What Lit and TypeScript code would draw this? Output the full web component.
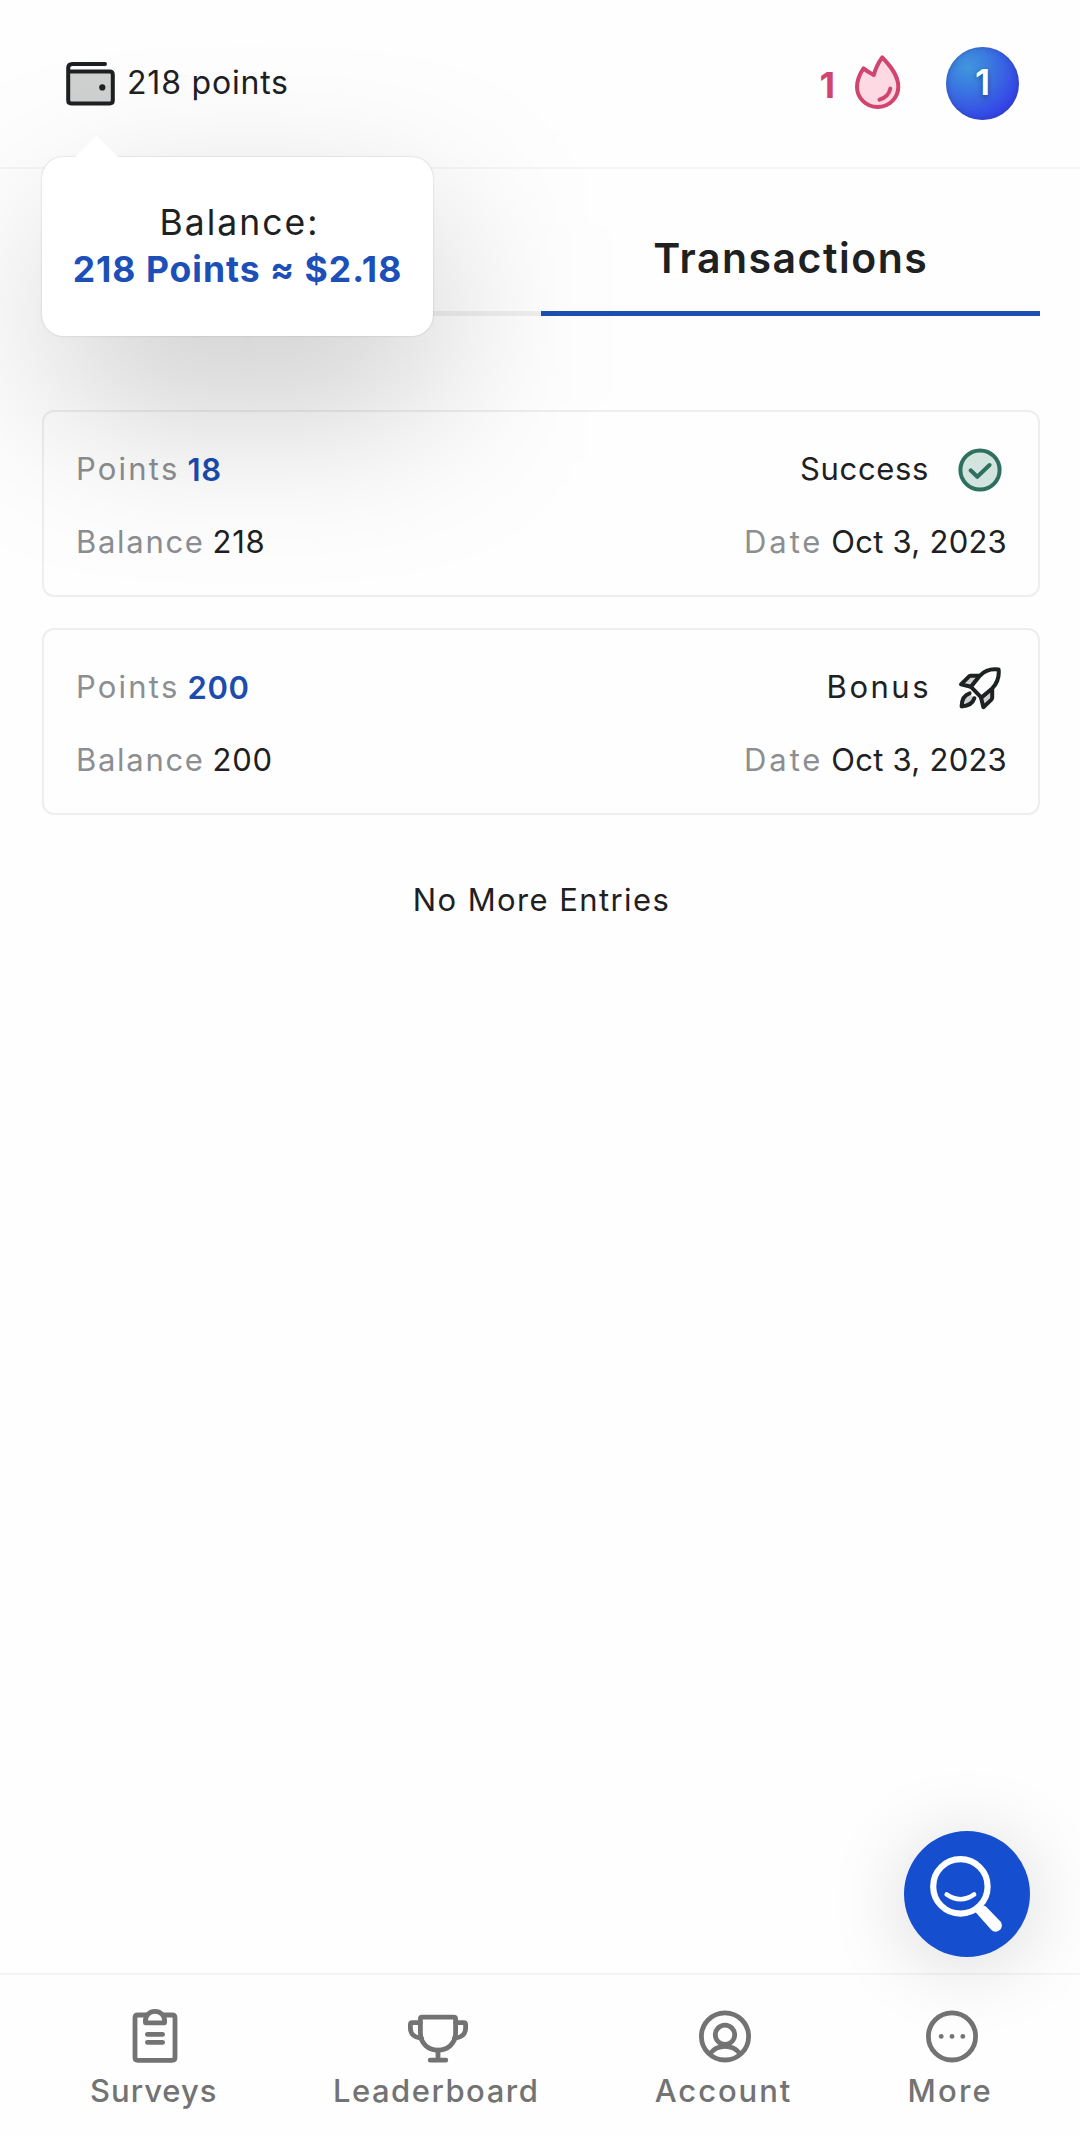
import { LitElement, html, css, svg } from "lit";
import { customElement, property } from "lit/decorators.js";

const walletIcon = html`<svg width="51" height="46" viewBox="0 0 51 46" fill="none" stroke="#1e2122" stroke-width="4" stroke-linecap="round" stroke-linejoin="round">
  <path d="M3.2 10.6H44.6Q47.8 10.6 47.8 13.8V39.2Q47.8 42.4 44.6 42.4H6.4Q3.2 42.4 3.2 39.2Z" fill="#cfd1d1" stroke="none"/>
  <path d="M40 3H7.4Q3.2 3 3.2 7V39.2Q3.2 42.4 6.4 42.4H44.6Q47.8 42.4 47.8 39.2V13.8Q47.8 10.6 44.6 10.6H5.6Q3.2 10.6 3.2 7.6"/>
  <circle cx="37.3" cy="26.4" r="3.1" fill="#1e2122" stroke="none"/>
</svg>`;

const flameIcon = html`<svg width="46" height="55" viewBox="0 0 46 55" fill="#fcd9e3" stroke="#d0446f" stroke-width="4" stroke-linecap="round" stroke-linejoin="round">
  <path d="M27.2 2.4C35.5 11 43.3 20.5 43.3 31.8C43.3 43 34 52 22.6 52C11.2 52 2 43 2 32C2 24.8 4.8 18.8 8.5 13.4C11.8 16.2 15 18 18.8 20C20.3 14.2 23.6 7.4 27.2 2.4Z"/>
  <path d="M35.3 33.6C34.2 38.6 30.2 43 24.5 44.6" fill="none"/>
</svg>`;

const successIcon = html`<svg width="44" height="44" viewBox="0 0 44 44" fill="none" stroke="#2d705d" stroke-width="4" stroke-linecap="round" stroke-linejoin="round">
  <circle cx="22" cy="22" r="19.6" fill="#d3e4df"/>
  <path d="M12.6 22.3L19.3 28.8L31.6 17"/>
</svg>`;

const bonusIcon = html`<svg width="44" height="44" viewBox="0 0 44 44" fill="none" stroke="#1e2122" stroke-width="4" stroke-linecap="round" stroke-linejoin="round">
  <path d="M22.2 9.8H12.6Q11.4 9.8 10.6 10.8L3 18.4L13 20.8Z" fill="#cfd1d1"/>
  <path d="M34.2 22V31.6Q34.2 32.8 33.4 33.6L25.4 41.2L23 31.6Z" fill="#cfd1d1"/>
  <path d="M40.6 3.6C33.8 2.6 27 4.4 21.8 9.8L13 20.8L23.4 31.6L34.2 22.4C39.4 17 41.4 10.4 40.6 3.6Z" fill="#fefefe"/>
  <path d="M11.6 27.4C6.2 29 3.8 33.6 3.6 40.4C9.8 40.2 14.6 37.8 16.4 32.2" fill="#cfd1d1"/>
</svg>`;

const searchIcon = html`<svg width="126" height="126" viewBox="0 0 126 126" fill="none" stroke="#fff" stroke-linecap="round">
  <circle cx="56.4" cy="55.4" r="27.2" stroke-width="6.2"/>
  <path d="M42.6 63.4Q56.5 73 70.2 63.4" stroke-width="4.4"/>
  <path d="M71.6 81.2L77.6 75.6Q80 73.8 82.4 76L96.2 90.2C98.4 92.8 98.4 96.4 96 98.8C93.4 101.4 89.6 101.4 87.2 98.8Z" fill="#fff" stroke="none"/>
</svg>`;

const navIcons: Record<string, unknown> = {
  surveys: svg`<path d="M15.6 8H7Q4 8 4 10.8V50.6Q4 53.4 7 53.4H41Q44 53.4 44 50.6V10.8Q44 8 41 8H32.4"/>
    <path d="M14.4 15.8V14C14.4 8.4 18.4 4.4 24 4.4S33.6 8.4 33.6 14V15.8Z"/>
    <path d="M16.4 27.4H31.6M16.4 35.4H31.6"/>`,
  leaderboard: svg`<path d="M6.4 12Q6.4 10.2 8.2 10.2H39.8Q41.6 10.2 41.6 12V26C41.6 36.2 33.8 43.2 24 43.2S6.4 36.2 6.4 26Z"/>
    <path d="M6.4 15.6H-1.6Q-3.6 15.6-3.6 17.6V21.4C-3.6 27 .6 30.6 7.6 31.4M41.6 15.6H49.6Q51.6 15.6 51.6 17.6V21.4C51.6 27 47.4 30.6 40.4 31.4M24 43.2V53M16.2 53.2H31.8"/>`,
  account: svg`<circle cx="24" cy="29.4" r="23.6"/><circle cx="24" cy="27.8" r="9.7"/>
    <path d="M9.2 46.4C12.4 42.2 17.6 39.4 24 39.4S35.6 42.2 38.8 46.4"/>`,
  more: svg`<circle cx="24" cy="29.4" r="23.6"/>
    <g fill="#727372" stroke="none"><circle cx="13.2" cy="29.4" r="2.4"/><circle cx="24" cy="29.4" r="2.4"/><circle cx="34.8" cy="29.4" r="2.4"/></g>`,
};

@customElement("transaction-card")
export class TransactionCard extends LitElement {
  @property() points = "";
  @property() balance = "";
  @property() status = "";
  @property() date = "";

  static styles = css`
    :host { display: block; }
    .card {
      box-sizing: border-box;
      height: 187px;
      border: 2px solid rgba(30, 33, 34, 0.07);
      border-radius: 12px;
      padding: 20px 31px 0 32px;
      font-size: 31px;
    }
    .row { display: flex; justify-content: space-between; align-items: center; height: 73px; }
    .pair { display: flex; gap: 8px; align-items: center; }
    .label { color: #8c8f92; letter-spacing: 2.2px; }
    .label.tight { letter-spacing: 1.7px; }
    .label.wide { letter-spacing: 2.9px; }
    .blue { color: #1b4cae; font-weight: 600; padding-top: 2px; letter-spacing: 0.7px; }
    .value { letter-spacing: 0.25px; }
    .amount { letter-spacing: 0.7px; }
    .state { display: flex; align-items: center; gap: 29px; padding-right: 5px; }
    .success { letter-spacing: 0.65px; }
    .bonus { letter-spacing: 2.5px; gap: 27px; }
    svg { display: block; margin-top: 2px; }
  `;

  render() {
    const bonus = this.status === "Bonus";
    return html`<div class="card">
      <div class="row">
        <div class="pair"><span class="label">Points</span><span class="blue">${this.points}</span></div>
        <div class="state ${bonus ? "bonus" : "success"}"><span>${this.status}</span>${bonus ? bonusIcon : successIcon}</div>
      </div>
      <div class="row">
        <div class="pair"><span class="label tight">Balance</span><span class="amount">${this.balance}</span></div>
        <div class="pair"><span class="label wide">Date</span><span class="value">${this.date}</span></div>
      </div>
    </div>`;
  }
}

@customElement("app-root")
export class AppRoot extends LitElement {
  static styles = css`
    :host {
      display: block;
      position: relative;
      height: 2136px;
      overflow: hidden;
      background: #fefefe;
      color: #1e2122;
      font-family: Inter, "Open Sans", sans-serif;
      font-size: 31px;
    }
    svg { display: block; }
    .page { display: flex; flex-direction: column; height: 2136px; }
    .header {
      box-sizing: border-box;
      height: 169px;
      border-bottom: 2px solid #f6f6f6;
      padding: 0 61px 0 65px;
      display: flex;
      align-items: center;
      justify-content: space-between;
    }
    .points { display: flex; align-items: center; gap: 11px; font-size: 32px; letter-spacing: 0.8px; }
    .points span { padding-bottom: 3px; }
    .stats { display: flex; align-items: center; }
    .streak { color: #d0446f; font-size: 36px; font-weight: 700; padding-top: 3px; margin-right: 20px; }
    .flame { margin: -2px 45px 0 0; }
    .badge {
      box-sizing: border-box;
      width: 73px; height: 73px; border-radius: 50%; padding-bottom: 2px; margin-top: -1px;
      display: flex; align-items: center; justify-content: center;
      color: #fff; font-size: 36px; font-weight: 600;
      text-shadow: 0 2px 5px rgba(0, 0, 0, 0.4);
      background: radial-gradient(circle at 30% 27%, #4295dc 0%, #3b82e0 22%, #3963e2 48%, #3446e8 72%, #3029dc 100%);
      box-shadow: inset 0 0 5px rgba(40, 60, 120, 0.5);
    }
    .tabs { display: flex; height: 147px; margin: 0 40px 0 42px; }
    .tab {
      flex: 1; box-sizing: border-box; padding-top: 36px;
      display: flex; align-items: center; justify-content: center;
      border-bottom: 5px solid #efefef;
      font-size: 41px; font-weight: 600; letter-spacing: 1.5px;
    }
    .tab.active { border-bottom-color: #1f4fb0; padding-left: 1px; }
    .list { display: flex; flex-direction: column; gap: 31px; padding: 94px 40px 0 42px; }
    .end { text-align: center; margin-top: 65px; padding-left: 3px; line-height: 40px; letter-spacing: 1.4px; }
    .nav {
      box-sizing: border-box;
      margin-top: auto; height: 163px; border-top: 2px solid #f5f5f5;
      padding: 32px 87px 0 90px;
      display: flex; justify-content: space-between;
      color: #727372; font-weight: 500;
    }
    .item { display: flex; flex-direction: column; align-items: center; }
    .item svg { overflow: visible; margin-left: 3px; }
    .item span { line-height: 40px; margin-top: 7px; }
    .surveys { letter-spacing: 1px; }
    .leaderboard { letter-spacing: 1.5px; }
    .account { letter-spacing: 1.9px; }
    .more { letter-spacing: 2.2px; }
    .glow {
      position: absolute; left: 60px; top: 222px; width: 378px; height: 186px;
      border-radius: 21px; background: rgba(0, 0, 0, 0.2);
      filter: blur(84px);
    }
    .popover {
      position: absolute; left: 42px; top: 157px;
      box-sizing: border-box; width: 391px; height: 179px;
      padding-top: 42px; border-radius: 21px; background: #fff;
      display: flex; flex-direction: column; align-items: center;
      box-shadow: 0 0 2px rgba(0, 0, 0, 0.22);
    }
    .arrow {
      position: absolute; left: 39px; top: -15px; width: 31px; height: 31px;
      background: #fff; transform: rotate(45deg);
    }
    .caption { font-size: 35.5px; line-height: 47px; letter-spacing: 2px; padding-left: 4px; }
    .worth { font-size: 35.5px; line-height: 47px; font-weight: 700; color: #1d4fb8; letter-spacing: 1px; white-space: nowrap; }
    .fab {
      position: absolute; left: 904px; top: 1831px; width: 126px; height: 126px;
      border-radius: 50%; background: #154fd0;
      box-shadow: 0 8px 80px rgba(0, 0, 0, 0.15);
    }
  `;

  private nav = ["Surveys", "Leaderboard", "Account", "More"];

  render() {
    return html`
      <div class="page">
        <header class="header">
          <div class="points">${walletIcon}<span>218 points</span></div>
          <div class="stats">
            <span class="streak">1</span>
            <div class="flame">${flameIcon}</div>
            <div class="badge">1</div>
          </div>
        </header>
        <div class="tabs">
          <div class="tab"></div>
          <div class="tab active">Transactions</div>
        </div>
        <main class="list">
          <transaction-card points="18" balance="218" status="Success" date="Oct 3, 2023"></transaction-card>
          <transaction-card points="200" balance="200" status="Bonus" date="Oct 3, 2023"></transaction-card>
        </main>
        <div class="end">No More Entries</div>
        <nav class="nav">
          ${this.nav.map((name) => {
            const key = name.toLowerCase();
            return html`<div class="item ${key}">
              <svg width="48" height="57" viewBox="0 0 48 57" fill="none" stroke="#727372" stroke-width="4.8" stroke-linecap="round" stroke-linejoin="round">${navIcons[key]}</svg>
              <span>${name}</span>
            </div>`;
          })}
        </nav>
      </div>
      <div class="glow"></div>
      <div class="popover">
        <div class="arrow"></div>
        <div class="caption">Balance:</div>
        <div class="worth">218 Points ≈ $2.18</div>
      </div>
      <div class="fab">${searchIcon}</div>
    `;
  }
}
